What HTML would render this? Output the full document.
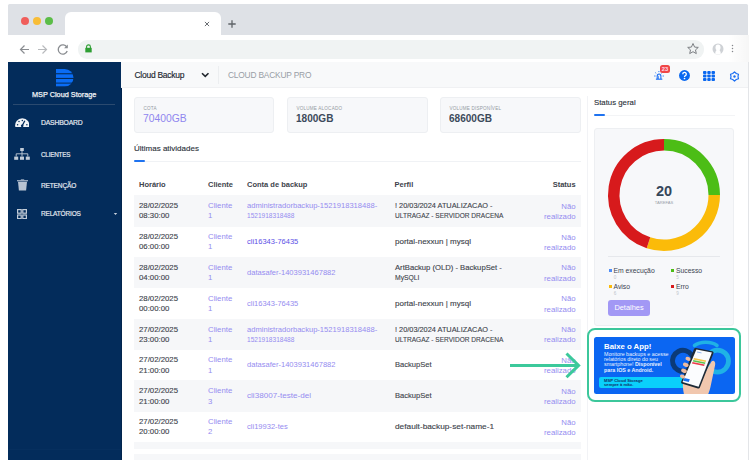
<!DOCTYPE html>
<html><head><meta charset="utf-8">
<style>
*{margin:0;padding:0;box-sizing:border-box}
html,body{width:755px;height:465px;overflow:hidden;background:#fff;font-family:"Liberation Sans",sans-serif}
div,span,svg{position:absolute}
.nw{white-space:nowrap}
#tabbar{left:8px;top:4px;width:739.5px;height:31px;background:#dee1e6;border-radius:1.5px 1.5px 0 0}
.dot{width:8px;height:8px;border-radius:50%;top:13px}
#tab{left:65px;top:11.5px;width:156px;height:24px;background:#fff;border-radius:6px 6px 0 0}
#addr{left:8px;top:35px;width:741px;height:27px;background:#fff}
#pill{left:78px;top:40px;width:626px;height:18.5px;background:#f0f3f3;border-radius:9px}
#page{left:8px;top:62px;width:740px;height:398px;background:#fff;overflow:hidden}
#side{left:8px;top:62px;width:113px;height:398px;background:#032c5b}
.mi{left:40.5px;font-size:7.4px;color:#e4e9f0;letter-spacing:-0.2px;line-height:8px;height:8px;white-space:nowrap;-webkit-text-stroke:0.2px #e4e9f0;margin-top:0.7px;transform-origin:0 50%}
#topbar{left:121px;top:62px;width:627px;height:26px;background:#f8f9fa;border-bottom:1px solid #f0f1f3}
.card{top:96.7px;height:36px;background:#f7f8fa;border:1px solid #edeff2;border-radius:3px}
.clab{left:8.5px;top:8.8px;font-size:4.6px;letter-spacing:0.2px;color:#959ba3;white-space:nowrap;line-height:5px}
.cval{left:8.3px;top:14.6px;font-size:10.8px;font-weight:bold;color:#3c4a5b;white-space:nowrap;line-height:12px;transform:scaleX(0.93);transform-origin:0 50%}
.row{left:134px;width:446.5px;height:31px}
.g{background:#f6f7f9}
.t{font-size:7.8px;line-height:10.2px;color:#3d434b;white-space:nowrap;-webkit-text-stroke:0.12px #3d434b}
.t.lk{-webkit-text-stroke:0}
.th{font-size:7.5px;font-weight:bold;color:#3d434b;line-height:10px;white-space:nowrap}
.lk{color:#958cf0}
.t i{display:block;font-style:normal;transform-origin:0 0;height:10.2px}
.dk{color:#5b4fe6;-webkit-text-stroke:0.3px #5b4fe6}
.st{right:0;text-align:right}
</style></head><body>
<!-- browser chrome -->
<div id="tabbar">
  <div class="dot" style="left:13px;background:#f05e5b"></div>
  <div class="dot" style="left:24.7px;background:#f8bd37"></div>
  <div class="dot" style="left:36.7px;background:#5bbd48"></div>
</div>
<div id="tab"></div>
<svg style="left:203px;top:20px" width="8" height="8" viewBox="0 0 8 8"><path d="M1.9 1.9L6.1 6.1M6.1 1.9L1.9 6.1" stroke="#6a6e73" stroke-width="1"/></svg>
<svg style="left:227px;top:19px" width="10" height="10" viewBox="0 0 10 10"><path d="M5 1.3V8.7M1.3 5H8.7" stroke="#5f6368" stroke-width="1.3"/></svg>
<div id="addr"></div><div style="left:728px;top:35px;width:21px;height:27px;background:linear-gradient(to right,rgba(0,0,0,0),rgba(0,0,0,0.035))"></div>
<div id="pill"></div>
<svg style="left:18px;top:43px" width="14" height="13" viewBox="0 0 14 13"><path d="M11 6.5H2.5M6.5 2.5L2.5 6.5L6.5 10.5" stroke="#8a8d91" stroke-width="1.2" fill="none"/></svg>
<svg style="left:36px;top:43px" width="14" height="13" viewBox="0 0 14 13"><path d="M2 6.5H10.5M6.5 2.5L10.5 6.5L6.5 10.5" stroke="#b8babd" stroke-width="1.2" fill="none"/></svg>
<svg style="left:56px;top:43px" width="14" height="13" viewBox="0 0 14 13"><path d="M10.8 4.2A4.6 4.6 0 1 0 11.2 8" stroke="#8a8d91" stroke-width="1.3" fill="none"/><path d="M11.8 1.6V5.3H8.1Z" fill="#8a8d91"/></svg>
<svg style="left:84px;top:44px" width="9" height="9" viewBox="0 0 9 9"><path d="M2.6 4V2.8A1.9 1.9 0 0 1 6.4 2.8V4" stroke="#2e9e33" stroke-width="1.1" fill="none"/><rect x="1.3" y="3.8" width="6.4" height="4.6" fill="#2e9e33"/></svg>
<svg style="left:686px;top:42px" width="14" height="14" viewBox="0 0 14 14"><path d="M7 1.5L8.6 5.1L12.3 5.4L9.5 7.9L10.3 11.6L7 9.7L3.7 11.6L4.5 7.9L1.7 5.4L5.4 5.1Z" stroke="#7d8084" stroke-width="1" fill="none" stroke-linejoin="round"/></svg>
<svg style="left:712.2px;top:42.8px" width="12" height="12" viewBox="0 0 12 12"><defs><clipPath id="pc"><circle cx="6" cy="6" r="5.5"/></clipPath></defs><g clip-path="url(#pc)"><rect width="12" height="12" fill="#cfd2d6"/><ellipse cx="6" cy="4.4" rx="2.5" ry="3" fill="#fff"/><path d="M3.1 12C3.1 9.2 3.9 7.4 4.9 6.8H7.1C8.1 7.4 8.9 9.2 8.9 12Z" fill="#fff"/></g></svg>
<svg style="left:731px;top:44px" width="3" height="10" viewBox="0 0 3 10"><circle cx="1.5" cy="1.5" r="0.75" fill="#85888c"/><circle cx="1.5" cy="4.5" r="0.75" fill="#85888c"/><circle cx="1.5" cy="7.5" r="0.75" fill="#85888c"/></svg>

<!-- page -->
<div id="page"></div>
<div id="side"><div style="left:0;top:387.3px;width:113px;height:1px;background:#062f5e"></div><div style="left:112.5px;top:0;width:0.5px;height:398px;background:#02254d"></div></div>
<svg style="left:56px;top:69px" width="17.5" height="17.5" viewBox="0 0 17.5 17.5">
  <defs><clipPath id="dc"><path d="M0 0H8.75A8.75 8.75 0 0 1 8.75 17.5H0Z"/></clipPath></defs>
  <g clip-path="url(#dc)" fill="#0a6cf5">
    <rect x="0" y="0" width="18" height="4.2"/>
    <rect x="0" y="5.3" width="18" height="3.6"/>
    <rect x="0" y="10" width="18" height="3.6"/>
    <rect x="0" y="14.6" width="18" height="3"/>
  </g>
</svg>
<div class="nw" style="left:32px;top:90.5px;font-size:7.3px;line-height:8px;color:#f0f3f7;-webkit-text-stroke:0.25px #f0f3f7">MSP Cloud Storage</div>
<div style="left:13px;top:103.5px;width:102px;height:1px;background:#2b4a6f"></div>
<div class="mi" style="top:118.2px;transform:scaleX(0.922)">DASHBOARD</div>
<div class="mi" style="top:150.3px;transform:scaleX(0.848)">CLIENTES</div>
<div class="mi" style="top:181.5px;transform:scaleX(0.889)">RETENÇÃO</div>
<div class="mi" style="top:209.6px;transform:scaleX(0.88)">RELATÓRIOS</div>
<svg style="left:113px;top:212px" width="5" height="4" viewBox="0 0 5 4"><path d="M0.8 0.9H4.2L2.5 2.9Z" fill="#c9d2de"/></svg>
<!-- dashboard icon -->
<svg style="left:14.8px;top:117.8px" width="14.6" height="9.4" viewBox="0 -0.2 14.6 9.4"><path d="M0.5 9.2A7.1 7.1 0 1 1 14.1 9.2Z" fill="#f2f4f7"/><g fill="#032c5b"><circle cx="2.6" cy="6.6" r="0.75"/><circle cx="4" cy="3.4" r="0.75"/><circle cx="7.3" cy="2.2" r="0.75"/><circle cx="11.9" cy="6.6" r="0.75"/></g><path d="M9.8 2.6L7.2 7.6" stroke="#032c5b" stroke-width="1.3"/><circle cx="7.2" cy="7.6" r="1.3" fill="#032c5b"/></svg>
<!-- sitemap icon -->
<svg style="left:14px;top:147.5px" width="16" height="12" viewBox="0 0 16 12"><g fill="#c2ccd8"><rect x="6.2" y="0" width="3.6" height="3"/><rect x="0.2" y="8.6" width="4" height="3.2"/><rect x="6" y="8.6" width="4" height="3.2"/><rect x="11.8" y="8.6" width="4" height="3.2"/></g><path d="M8 3V8.6M2.2 8.6V5.8H13.8V8.6" stroke="#c2ccd8" stroke-width="0.9" fill="none"/></svg>
<!-- trash icon -->
<svg style="left:16.5px;top:178.9px" width="11" height="12" viewBox="0 0 11 12"><path d="M0 1.2H11V2.3H0Z" fill="#b7c3d2"/><path d="M3.8 0.4H7.2V1.2H3.8Z" fill="#b7c3d2"/><path d="M1 2.8H10L9.1 11.5H1.9Z" fill="#b7c3d2"/></svg>
<!-- grid icon -->
<svg style="left:17px;top:209px" width="10" height="10.2" viewBox="0 0 10 10.2"><g fill="none" stroke="#c2ccd8" stroke-width="1.2"><rect x="0.6" y="0.6" width="3.6" height="3.6"/><rect x="5.8" y="0.6" width="3.6" height="3.6"/><rect x="0.6" y="6" width="3.6" height="3.6"/><rect x="5.8" y="6" width="3.6" height="3.6"/></g></svg>

<!-- top bar -->
<div id="topbar"></div>
<div class="nw" style="left:134.5px;top:70.5px;font-size:8.5px;line-height:9px;color:#22272f;letter-spacing:-0.27px;-webkit-text-stroke:0.15px #22272f">Cloud Backup</div>
<svg style="left:201px;top:72px" width="8.5" height="6" viewBox="0 0 8.5 6"><path d="M1 1.2L4.25 4.4L7.5 1.2" stroke="#22272e" stroke-width="1.6" fill="none"/></svg>
<div style="left:218px;top:66px;width:1px;height:18px;background:#eceef0"></div>
<div class="nw" style="left:228px;top:70.5px;font-size:8.4px;line-height:9px;color:#999ea6;letter-spacing:-0.2px">CLOUD BACKUP PRO</div>
<!-- siren -->
<svg style="left:653px;top:70.3px" width="12" height="10" viewBox="0 0 12 10"><g stroke="#1a6ef2" fill="none"><path d="M4.2 9V6.2A1.85 2.2 0 0 1 7.9 6.2V9" stroke-width="1.1"/><path d="M5.5 9V6.6A0.7 0.7 0 0 1 6.2 5.9" stroke-width="0.7"/><path d="M2.9 9.2H9.3" stroke-width="1.1"/><path d="M1.2 6H2.5M9.6 6H10.9" stroke-width="0.9"/><path d="M2.3 2.6L3.2 3.3M9.3 2.6L8.4 3.3M5.9 1V2.1" stroke-width="0.9"/></g></svg>
<div style="left:660px;top:65px;width:9.8px;height:8.4px;background:#f04646;border-radius:2.5px;color:#fde;font-size:5.8px;line-height:8.4px;text-align:center;font-weight:bold">23</div>
<svg style="left:678.5px;top:70.3px" width="11" height="11" viewBox="0 0 11 11"><circle cx="5.5" cy="5.5" r="5.45" fill="#0a68f0"/><path d="M3.8 4.3A1.75 1.75 0 1 1 6.1 5.8C5.65 6.05 5.5 6.35 5.5 6.95" stroke="#fff" stroke-width="1.35" fill="none"/><circle cx="5.5" cy="8.5" r="0.85" fill="#fff"/></svg>
<svg style="left:703px;top:71px" width="12" height="10" viewBox="0 0 12 10"><g fill="#0a68f0"><rect x="0" y="0" width="3.5" height="2.9" rx="0.9"/><rect x="4.25" y="0" width="3.5" height="2.9" rx="0.9"/><rect x="8.5" y="0" width="3.5" height="2.9" rx="0.9"/><rect x="0" y="3.55" width="3.5" height="2.9" rx="0.9"/><rect x="4.25" y="3.55" width="3.5" height="2.9" rx="0.9"/><rect x="8.5" y="3.55" width="3.5" height="2.9" rx="0.9"/><rect x="0" y="7.1" width="3.5" height="2.9" rx="0.9"/><rect x="4.25" y="7.1" width="3.5" height="2.9" rx="0.9"/><rect x="8.5" y="7.1" width="3.5" height="2.9" rx="0.9"/></g></svg>
<svg style="left:728.7px;top:70.9px" width="11" height="11" viewBox="0 0 11 11"><path d="M5.50 0.90L7.25 2.47L9.48 3.20L9.00 5.50L9.48 7.80L7.25 8.53L5.50 10.10L3.75 8.53L1.52 7.80L2.00 5.50L1.52 3.20L3.75 2.47Z" stroke="#1a6ef2" stroke-width="1.2" fill="none" stroke-linejoin="round"/><circle cx="5.5" cy="5.5" r="1.2" fill="#1a6ef2"/></svg>

<!-- cards -->
<div class="card" style="left:134px;width:140px"><div class="clab">COTA</div><div class="cval" style="color:#8f86ef;font-weight:normal;transform:scaleX(0.956)">70400GB</div></div>
<div class="card" style="left:287px;width:141px"><div class="clab">VOLUME ALOCADO</div><div class="cval">1800GB</div></div>
<div class="card" style="left:440px;width:141px"><div class="clab">VOLUME DISPONÍVEL</div><div class="cval">68600GB</div></div>

<!-- ultimas atividades -->
<div class="nw" style="left:134px;top:143.5px;font-size:8px;line-height:9px;color:#2b313a;-webkit-text-stroke:0.12px #2b313a">Últimas atividades</div>
<div style="left:134px;top:160.5px;width:447px;height:1px;background:#f0f2f5"></div>
<div style="left:134px;top:159.5px;width:11px;height:2.2px;background:#1f73f0;border-radius:1px"></div>

<!-- table header -->
<div class="th" style="left:139px;top:180px">Horário</div>
<div class="th" style="left:208px;top:180px">Cliente</div>
<div class="th" style="left:247px;top:180px">Conta de backup</div>
<div class="th" style="left:394.5px;top:180px">Perfil</div>
<div class="th" style="left:500px;top:180px;width:75.6px;text-align:right">Status</div>

<!--ROWS-->
<div class="row g" style="top:195.20px;height:31.5px"></div>
<div class="t" style="left:139px;top:201.10px">28/02/2025<br>08:30:00</div>
<div class="t lk" style="left:208px;top:201.10px">Cliente<br>1</div>
<div class="t lk" style="left:247px;top:201.10px"><i style="transform:scaleX(0.972)">administradorbackup-1521918318488-</i><i style="transform:scaleX(0.84)">1521918318488</i></div>
<div class="t" style="left:394.5px;top:201.10px"><i style="transform:scaleX(0.943)">! 20/03/2024 ATUALIZACAO -</i><i style="transform:scaleX(0.842)">ULTRAGAZ - SERVIDOR DRACENA</i></div>
<div class="t lk" style="left:500px;width:75.6px;text-align:right;top:201.70px">Não<br>realizado</div>
<div class="row" style="top:226.07px;height:31px"></div>
<div class="t" style="left:139px;top:231.97px">28/02/2025<br>06:00:00</div>
<div class="t lk" style="left:208px;top:231.97px">Cliente<br>1</div>
<div class="t lk dk" style="left:247px;top:236.97px"><i style="transform:scaleX(0.962)">cli16343-76435</i></div>
<div class="t" style="left:394.5px;top:236.97px"><i style="transform:scaleX(1.027)">portal-nexxun | mysql</i></div>
<div class="t lk" style="left:500px;width:75.6px;text-align:right;top:232.57px">Não<br>realizado</div>
<div class="row g" style="top:256.95px;height:31.5px"></div>
<div class="t" style="left:139px;top:262.85px">28/02/2025<br>04:00:00</div>
<div class="t lk" style="left:208px;top:262.85px">Cliente<br>1</div>
<div class="t lk" style="left:247px;top:267.85px"><i style="transform:scaleX(0.967)">datasafer-1403931467882</i></div>
<div class="t" style="left:394.5px;top:262.85px"><i style="transform:scaleX(0.982)">ArtBackup (OLD) - BackupSet -</i><i style="transform:scaleX(0.87)">MySQLI</i></div>
<div class="t lk" style="left:500px;width:75.6px;text-align:right;top:263.45px">Não<br>realizado</div>
<div class="row" style="top:287.82px;height:31px"></div>
<div class="t" style="left:139px;top:293.72px">28/02/2025<br>00:00:00</div>
<div class="t lk" style="left:208px;top:293.72px">Cliente<br>1</div>
<div class="t lk" style="left:247px;top:298.72px"><i style="transform:scaleX(0.962)">cli16343-76435</i></div>
<div class="t" style="left:394.5px;top:298.72px"><i style="transform:scaleX(1.027)">portal-nexxun | mysql</i></div>
<div class="t lk" style="left:500px;width:75.6px;text-align:right;top:294.32px">Não<br>realizado</div>
<div class="row g" style="top:318.70px;height:31.5px"></div>
<div class="t" style="left:139px;top:324.60px">27/02/2025<br>23:00:00</div>
<div class="t lk" style="left:208px;top:324.60px">Cliente<br>1</div>
<div class="t lk" style="left:247px;top:324.60px"><i style="transform:scaleX(0.972)">administradorbackup-1521918318488-</i><i style="transform:scaleX(0.84)">1521918318488</i></div>
<div class="t" style="left:394.5px;top:324.60px"><i style="transform:scaleX(0.943)">! 20/03/2024 ATUALIZACAO -</i><i style="transform:scaleX(0.842)">ULTRAGAZ - SERVIDOR DRACENA</i></div>
<div class="t lk" style="left:500px;width:75.6px;text-align:right;top:325.20px">Não<br>realizado</div>
<div class="row" style="top:349.57px;height:31px"></div>
<div class="t" style="left:139px;top:355.47px">27/02/2025<br>21:00:00</div>
<div class="t lk" style="left:208px;top:355.47px">Cliente<br>1</div>
<div class="t lk" style="left:247px;top:360.47px"><i style="transform:scaleX(0.967)">datasafer-1403931467882</i></div>
<div class="t" style="left:394.5px;top:360.47px"><i style="transform:scaleX(0.973)">BackupSet</i></div>
<div class="t lk" style="left:500px;width:75.6px;text-align:right;top:356.07px">Não<br>realizado</div>
<div class="row g" style="top:380.45px;height:31.5px"></div>
<div class="t" style="left:139px;top:386.35px">27/02/2025<br>21:00:00</div>
<div class="t lk" style="left:208px;top:386.35px">Cliente<br>3</div>
<div class="t lk" style="left:247px;top:391.35px"><i style="transform:scaleX(1.041)">cli38007-teste-del</i></div>
<div class="t" style="left:394.5px;top:391.35px"><i style="transform:scaleX(0.973)">BackupSet</i></div>
<div class="t lk" style="left:500px;width:75.6px;text-align:right;top:386.95px">Não<br>realizado</div>
<div class="row" style="top:411.32px;height:31px"></div>
<div class="t" style="left:139px;top:417.22px">27/02/2025<br>20:00:00</div>
<div class="t lk" style="left:208px;top:417.22px">Cliente<br>2</div>
<div class="t lk" style="left:247px;top:422.22px"><i style="transform:scaleX(0.968)">cli19932-tes</i></div>
<div class="t" style="left:394.5px;top:422.22px"><i style="transform:scaleX(1.063)">default-backup-set-name-1</i></div>
<div class="t lk" style="left:500px;width:75.6px;text-align:right;top:417.82px">Não<br>realizado</div>
<div class="row g" style="top:442.20px;height:7.1px"></div>
<div class="row g" style="top:453.5px;height:6.5px"></div>
<!--/ROWS-->

<!-- right panel -->
<div style="left:587px;top:96px;width:1px;height:364px;background:#f2f3f6"></div>
<div style="left:748px;top:62px;width:1px;height:398px;background:#e3e5e8"></div>
<div class="nw" style="left:594px;top:97.5px;font-size:7.8px;line-height:9px;color:#2b313a;-webkit-text-stroke:0.12px #2b313a">Status geral</div>
<div style="left:594px;top:115px;width:141px;height:1px;background:#f3f4f6"></div>
<div style="left:594px;top:114px;width:11px;height:2.2px;background:#1f73f0;border-radius:1px"></div>
<div style="left:594px;top:128px;width:140px;height:198px;background:#f7f8fa;border:1px solid #edeff2;border-radius:3px"></div>
<svg style="left:604px;top:135px" width="120" height="120" viewBox="0 0 120 120" id="donut"><path d="M60.00 9.75A50.25 50.25 0 0 1 110.25 60.00" stroke="#4cbd16" stroke-width="11.5" fill="none"/><path d="M110.25 60.00A50.25 50.25 0 0 1 44.47 107.79" stroke="#fbbb09" stroke-width="11.5" fill="none"/><path d="M44.47 107.79A50.25 50.25 0 0 1 60.00 9.75" stroke="#d71a1c" stroke-width="11.5" fill="none"/></svg>

<div class="nw" style="left:644px;top:183px;width:40px;text-align:center;font-size:14.5px;line-height:16px;font-weight:bold;color:#35475a">20</div>
<div class="nw" style="left:644px;top:199.5px;width:40px;text-align:center;font-size:4.1px;line-height:5px;letter-spacing:0px;color:#9aa1a9">TAREFAS</div>
<div style="left:608px;top:256px;width:112px;height:1px;background:#e6e8ec"></div>
<div style="left:608.6px;top:268.5px;width:3px;height:3px;background:#4e8df7"></div>
<div class="nw" style="left:613.5px;top:265.5px;font-size:6.8px;line-height:9px;color:#3b4350">Em execução</div>
<div class="nw" style="left:613.8px;top:274.5px;font-size:4.6px;line-height:5px;color:#c0c5cc">0</div>
<div style="left:671px;top:268.5px;width:3px;height:3px;background:#4cbd16"></div>
<div class="nw" style="left:676px;top:265.5px;font-size:6.8px;line-height:9px;color:#3b4350">Sucesso</div>
<div class="nw" style="left:676.3px;top:274.5px;font-size:4.6px;line-height:5px;color:#c0c5cc">5</div>
<div style="left:608.6px;top:284.8px;width:3px;height:3px;background:#fbbb09"></div>
<div class="nw" style="left:613.5px;top:281.8px;font-size:6.8px;line-height:9px;color:#3b4350">Aviso</div>
<div class="nw" style="left:613.8px;top:290.5px;font-size:4.6px;line-height:5px;color:#c0c5cc">6</div>
<div style="left:671px;top:284.8px;width:3px;height:3px;background:#d71a1c"></div>
<div class="nw" style="left:676px;top:281.8px;font-size:6.8px;line-height:9px;color:#3b4350">Erro</div>
<div class="nw" style="left:676.3px;top:290.5px;font-size:4.6px;line-height:5px;color:#c0c5cc">9</div>
<div class="nw" style="left:608.3px;top:299.5px;width:41.4px;height:16px;background:#a298f5;border-radius:3px;color:#ffffff;font-size:7.4px;line-height:16px;text-align:center">Detalhes</div>

<!-- banner -->
<div style="left:587.2px;top:328.1px;width:154.1px;height:74.1px;border:2px solid #3cc79b;border-radius:8px;background:#fff"></div>
<div style="left:594px;top:336.5px;width:140.5px;height:57px;background:#0b66f2;border-radius:2.5px;overflow:hidden"></div>
<div class="nw" style="left:604px;top:341.5px;font-size:7.8px;line-height:9px;font-weight:bold;color:#fff">Baixe o App!</div>
<div class="nw" style="left:604px;top:351.5px;font-size:5.3px;line-height:5.4px;color:#e8f0ff">Monitore backups e acesse<br>relatórios direto do seu<br>smartphone! <b>Disponível</b><br><b>para IOS e Android.</b></div>
<div style="left:599px;top:377.2px;width:86px;height:10.8px;background:#0ad0fb;border-radius:2px 0 0 2px"></div>
<div class="nw" style="left:604px;top:378.8px;font-size:4.2px;line-height:4.6px;font-weight:bold;color:#10306a">MSP Cloud Storage<br>sempre à mão.</div>
<svg style="left:594px;top:336.5px" width="140.5" height="57" viewBox="594 336.5 140.5 57">
  <path d="M691.60 354.28A10.5 10.5 0 1 0 684.82 370.64" stroke="#0b3a78" stroke-width="5" fill="none" stroke-linecap="round"/>
  <path d="M694.5 345C700 341 711 340.5 717 345" stroke="#1fb2e6" stroke-width="3.6" fill="none" stroke-linecap="round"/>
  <circle cx="717.5" cy="360.6" r="11" stroke="#1fb2e6" stroke-width="4.8" fill="none"/>
  <path d="M684 394C683 389 682 384 684 379L690 368L705 372L711.5 361C713.5 359 716 361 715 365L711 384C710 389 709 392 708 394Z" fill="#f1c7ae"/>
  <path d="M696.2 347.6L712.3 350.8C713.3 351 713.8 351.7 713.5 352.7L699.9 386.9C699.6 387.8 698.8 388.2 697.9 388L682.3 383.3C681.3 383 680.9 382.2 681.2 381.3L694 348.6C694.4 347.7 695.2 347.4 696.2 347.6Z" fill="#1e2a36"/>
  <path d="M696.4 348.9L711.9 352L698.6 386.3L682.6 381.6Z" fill="#fbfcfe"/>
  <path d="M694 357.5L706.2 360L705.6 361.5L693.4 359Z" fill="#f6c445"/>
  <path d="M693.3 359.6L705.5 362.1L705 363.4L692.8 360.9Z" fill="#5ec34e"/>
  <path d="M692.5 361.6L704.7 364.1L704.1 365.6L691.9 363.1Z" fill="#ec3d4c"/>
  <path d="M697 351.5L701.5 352.4" stroke="#7aa8f0" stroke-width="0.8"/>
  <path d="M684.3 377.6L689.8 378.8L688.8 381.5L683.3 380.3Z" fill="#1a6ff0"/>
  <g fill="#ecbba0"><ellipse cx="688" cy="358.3" rx="2.6" ry="1.9" transform="rotate(20 688 358.3)"/><ellipse cx="685.8" cy="364.3" rx="2.9" ry="2" transform="rotate(20 685.8 364.3)"/><ellipse cx="684" cy="370.3" rx="2.9" ry="2" transform="rotate(20 684 370.3)"/><ellipse cx="682.6" cy="376" rx="2.7" ry="1.9" transform="rotate(20 682.6 376)"/></g>
</svg>
<!-- arrow -->
<svg style="left:505px;top:348px" width="80" height="35" viewBox="505 348 80 35"><path d="M510 365.4H578" stroke="#3cc99b" stroke-width="3"/><path d="M566.5 353.5L578.6 365.4L566.5 377.3" stroke="#3cc99b" stroke-width="3" fill="none"/></svg>
</body></html>
